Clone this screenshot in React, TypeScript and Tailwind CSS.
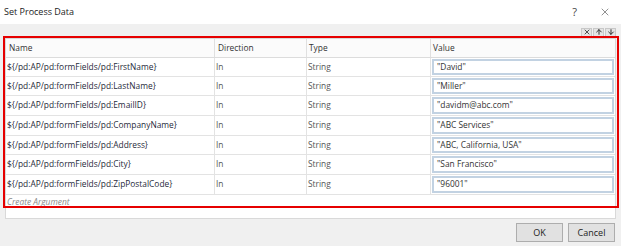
import { X, ArrowUp, ArrowDown } from "lucide-react";

type Arg = { name: string; dir: string; type: string; value: string };

const args: Arg[] = [
  { name: "${/pd:AP/pd:formFields/pd:FirstName}", dir: "In", type: "String", value: "\"David\"" },
  { name: "${/pd:AP/pd:formFields/pd:LastName}", dir: "In", type: "String", value: "\"Miller\"" },
  { name: "${/pd:AP/pd:formFields/pd:EmailID}", dir: "In", type: "String", value: "\"davidm@abc.com\"" },
  { name: "${/pd:AP/pd:formFields/pd:CompanyName}", dir: "In", type: "String", value: "\"ABC Services\"" },
  { name: "${/pd:AP/pd:formFields/pd:Address}", dir: "In", type: "String", value: "\"ABC, California, USA\"" },
  { name: "${/pd:AP/pd:formFields/pd:City}", dir: "In", type: "String", value: "\"San Francisco\"" },
  { name: "${/pd:AP/pd:formFields/pd:ZipPostalCode}", dir: "In", type: "String", value: "\"96001\"" },
];

// row heights taken from the screenshot (19/20 alternate)
const tall = [false, false, true, true, false, true, true];

export default function App() {
  return (
    <div className="relative w-[621px] h-[246px] bg-[#f0f0f0] flex flex-col text-[9px] text-[#333] font-['Open_Sans','Noto_Sans',sans-serif]">
      {/* title bar */}
      <div className="h-[24px] bg-white flex items-center justify-between pl-[4px] pr-[10px]">
        <span className="text-[#222]">Set Process Data</span>
        <div className="flex items-center gap-[22px] text-[#444]">
          <span className="text-[11px]">?</span>
          <X className="w-[12px] h-[12px]" strokeWidth={1.2} />
        </div>
      </div>

      {/* little toolbar */}
      <div className="h-[14px] flex justify-end items-center pr-[5px] pt-[2px]">
        <div className="flex gap-[1px]">
          <div className="w-[11px] h-[9px] bg-[#e4e4e4] border border-[#c8c8c8] flex items-center justify-center">
            <X className="w-[8px] h-[8px] text-[#333]" strokeWidth={2.5} />
          </div>
          <div className="w-[11px] h-[9px] bg-[#e4e4e4] border border-[#c8c8c8] flex items-center justify-center">
            <ArrowUp className="w-[8px] h-[8px] text-[#333]" strokeWidth={3} />
          </div>
          <div className="w-[11px] h-[9px] bg-[#e4e4e4] border border-[#c8c8c8] flex items-center justify-center">
            <ArrowDown className="w-[8px] h-[8px] text-[#333]" strokeWidth={3} />
          </div>
        </div>
      </div>

      {/* grid */}
      <div className="mx-[5px] h-[181px] bg-white border border-[#d9d9d9] flex flex-col text-[8.4px]">
        <div className="h-[19px] flex border-b border-[#dcdcdc] bg-[#fbfbfb] text-[#333]">
          <div className="w-[209px] pl-[3px] flex items-center border-r border-[#e0e0e0]">Name</div>
          <div className="w-[92px] pl-[3px] flex items-center border-r border-[#e0e0e0]">Direction</div>
          <div className="w-[124px] pl-[2px] flex items-center border-r border-[#e0e0e0]">Type</div>
          <div className="flex-1 pl-[2px] flex items-center">Value</div>
        </div>
        {args.map((a, i) => (
          <div
            key={a.name}
            className={(tall[i] ? "h-[20px]" : "h-[19px]") + " flex border-b border-[#e3e3e3]"}
          >
            <div className="w-[209px] pl-[1px] flex items-center border-r border-[#e3e3e3] text-[#1f2a3a]">
              {a.name}
            </div>
            <div className="w-[92px] pl-[1px] flex items-center border-r border-[#e3e3e3] text-[#555]">{a.dir}</div>
            <div className="w-[124px] pl-[1px] flex items-center border-r border-[#e3e3e3] text-[#555]">{a.type}</div>
            <div className="flex-1 pl-[1px] pr-[1px] py-[1px] flex">
              <div className="flex-1 border-2 border-[#c2d2e2] bg-white flex items-center pl-[3px] text-[#333]">
                {a.value}
              </div>
            </div>
          </div>
        ))}
        <div className="h-[14px] pl-[1px] flex items-center italic text-[#8a8a8a]">Create Argument</div>
      </div>

      {/* buttons */}
      <div className="flex justify-end gap-[5px] pr-[6px] pt-[4px]">
        <button className="w-[47px] h-[19px] bg-[#e1e1e1] border border-[#adadad] text-[#222]">OK</button>
        <button className="w-[47px] h-[19px] bg-[#e1e1e1] border border-[#adadad] text-[#222]">Cancel</button>
      </div>

      {/* red annotation frame over the grid */}
      <div className="absolute left-[3px] top-[36px] w-[616px] h-[172px] border-2 border-[#e60000] pointer-events-none" />
    </div>
  );
}
